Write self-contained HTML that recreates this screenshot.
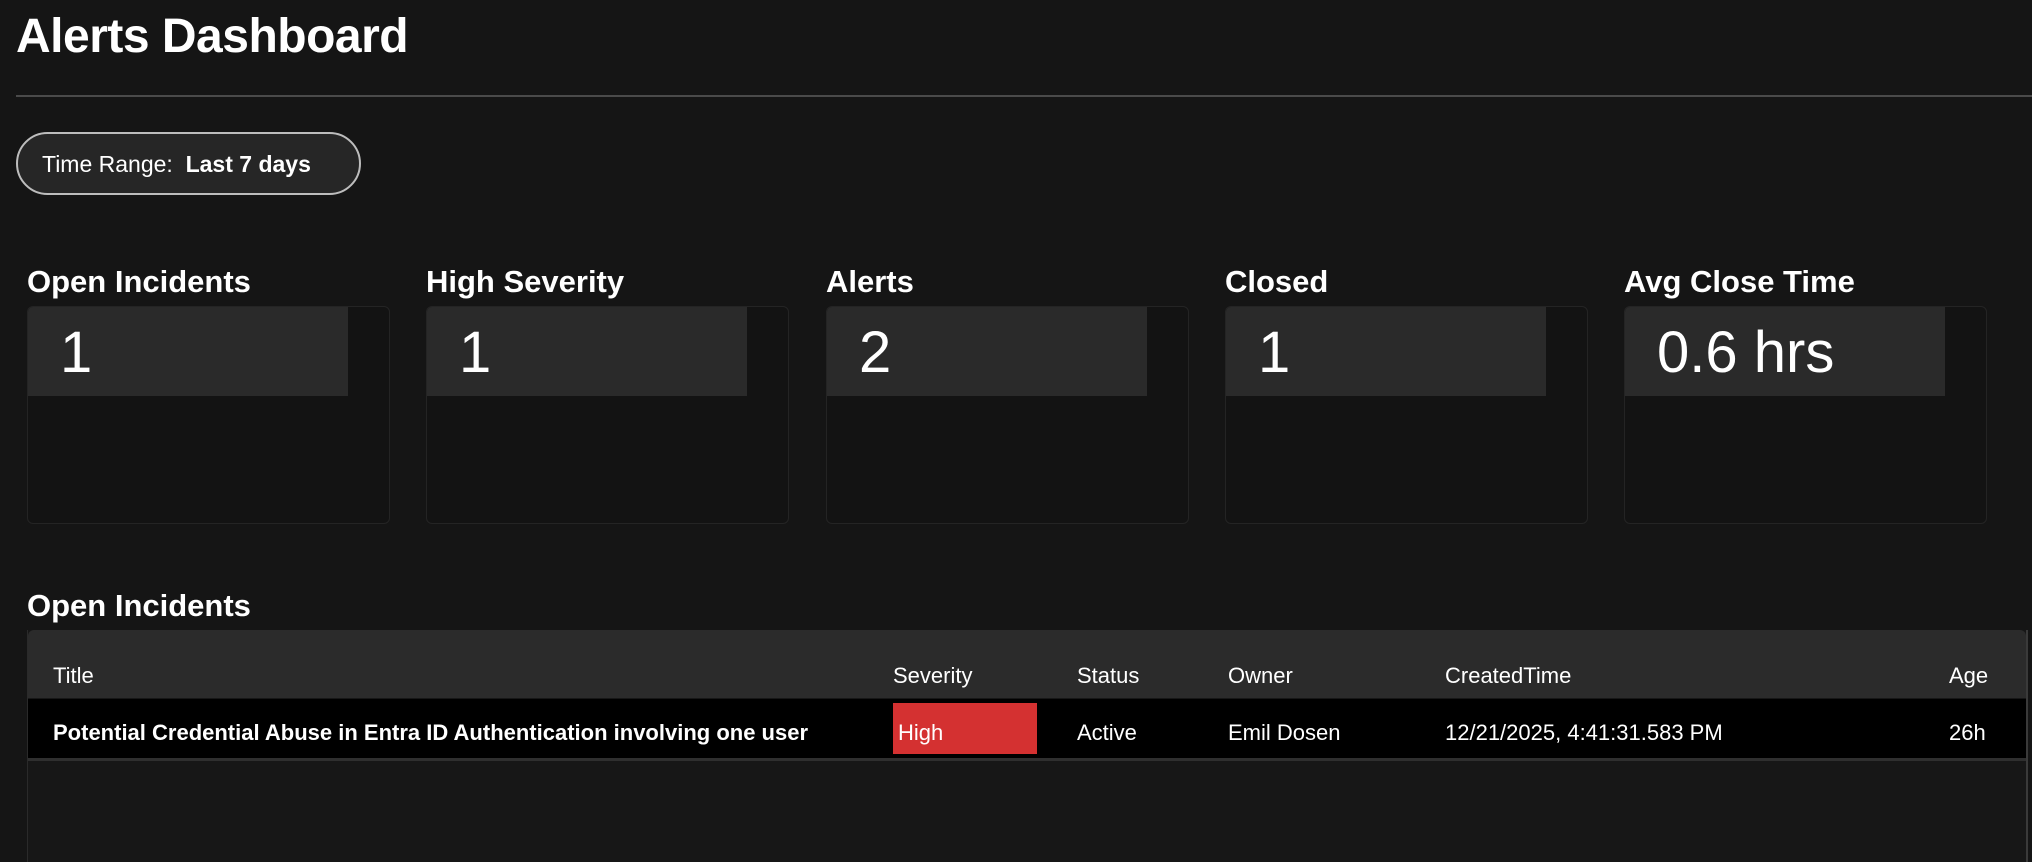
<!DOCTYPE html>
<html><head><meta charset="utf-8"><style>
*{margin:0;padding:0;box-sizing:border-box}
body{width:2032px;height:862px;background:#151515;color:#fff;font-family:"Liberation Sans",sans-serif;position:relative;overflow:hidden}
.abs{position:absolute}
h1{position:absolute;left:16px;top:9px;font-size:48px;font-weight:bold;letter-spacing:-0.5px;line-height:56px}
.hr{left:16px;top:95px;right:0;height:2px;background:#4a4a4a}
.pill{left:16px;top:132px;width:345px;height:63px;border:2px solid #bdbdbd;border-radius:32px;background:#262626;font-size:23px;line-height:61px;padding-left:24px}
.lbl{font-size:31px;font-weight:bold;position:absolute;top:264px;line-height:36px}
.card{position:absolute;top:306px;width:363px;height:218px;background:#131313;border:1px solid #242424;border-radius:6px;overflow:hidden}
.val{position:absolute;left:0;top:0;width:320px;height:89px;background:#2a2a2a;font-size:58px;line-height:92px;padding-left:32px}
.tbl{left:27px;top:630px;width:2001px;height:232px;background:#171717;border-left:1px solid #2a2a2a;border-right:2px solid #3a3a3a}
.th{position:absolute;left:0;top:0;width:100%;height:68px;background:#2b2b2b;border-radius:6px 6px 0 0}
.tr{position:absolute;left:0;top:69px;width:100%;height:62px;background:#000;border-bottom:3px solid #2f2f2f}
.c{position:absolute;font-size:22px}
.th .c{top:33px}
.tr .c{top:21px}
</style></head><body>
<h1>Alerts Dashboard</h1>
<div class="abs hr"></div>
<div class="abs pill">Time Range:&nbsp; <b>Last 7 days</b></div>

<div class="lbl" style="left:27px">Open Incidents</div>
<div class="lbl" style="left:426px">High Severity</div>
<div class="lbl" style="left:826px">Alerts</div>
<div class="lbl" style="left:1225px">Closed</div>
<div class="lbl" style="left:1624px">Avg Close Time</div>

<div class="card" style="left:27px"><div class="val">1</div></div>
<div class="card" style="left:426px"><div class="val">1</div></div>
<div class="card" style="left:826px"><div class="val">2</div></div>
<div class="card" style="left:1225px"><div class="val">1</div></div>
<div class="card" style="left:1624px"><div class="val">0.6 hrs</div></div>

<div class="lbl" style="left:27px;top:588px">Open Incidents</div>
<div class="abs tbl">
 <div class="th">
  <div class="c" style="left:25px">Title</div>
  <div class="c" style="left:865px">Severity</div>
  <div class="c" style="left:1049px">Status</div>
  <div class="c" style="left:1200px">Owner</div>
  <div class="c" style="left:1417px">CreatedTime</div>
  <div class="c" style="left:1921px">Age</div>
 </div>
 <div class="tr">
  <div class="c" style="left:25px;font-weight:bold">Potential Credential Abuse in Entra ID Authentication involving one user</div>
  <div class="abs" style="left:865px;top:4px;width:144px;height:51px;background:#d43131"></div>
  <div class="c" style="left:870px">High</div>
  <div class="c" style="left:1049px">Active</div>
  <div class="c" style="left:1200px">Emil Dosen</div>
  <div class="c" style="left:1417px">12/21/2025, 4:41:31.583 PM</div>
  <div class="c" style="left:1921px">26h</div>
 </div>
</div>
</body></html>
